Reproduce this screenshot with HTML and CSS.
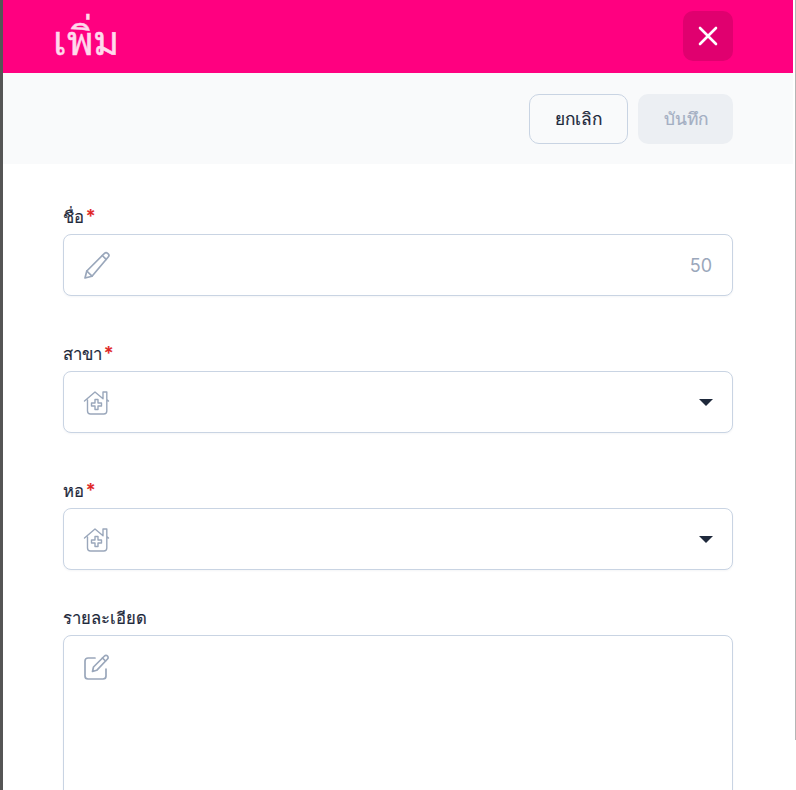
FILE: index.html
```html
<!DOCTYPE html>
<html lang="th">
<head>
<meta charset="utf-8">
<title>เพิ่ม</title>
<link rel="stylesheet" href="styles.css">
</head>
<body>
<div class="backdrop"></div>
<main class="panel">
  <header class="head">
    <h1 class="title">เพิ่ม</h1>
    <button class="close" type="button" aria-label="close">
      <svg width="24" height="24" viewBox="0 0 24 24" fill="none" stroke="#fff" stroke-width="2.6" stroke-linecap="round"><path d="M4 4l16 16M20 4L4 20"/></svg>
    </button>
  </header>
  <div class="toolbar">
    <button class="btn btn-cancel" type="button">ยกเลิก</button>
    <button class="btn btn-save" type="button">บันทึก</button>
  </div>
  <form class="form">
    <div class="field">
      <label class="label">ชื่อ<span class="req">*</span></label>
      <div class="control">
        <svg class="icon" width="28" height="28" viewBox="0 0 28 28" fill="none" stroke="#9aa7bb" stroke-width="1.7" stroke-linejoin="round" stroke-linecap="round"><path d="M3 27l1.800-7L22.500 2.300a2.200 2.200 0 0 1 3.100 0l.6.6a2.200 2.200 0 0 1 0 3.100L10 25.200z"/><path d="M20.300 4.500l3.900 3.900M4.800 20l5.200 5.200"/></svg>
        <span class="grow"></span>
        <span class="count">50</span>
      </div>
    </div>
    <div class="field">
      <label class="label">สาขา<span class="req">*</span></label>
      <div class="control">
        <svg class="icon" width="28" height="28" viewBox="0 0 28 28" fill="none" stroke="#9aa7bb" stroke-width="1.4" stroke-linejoin="round" stroke-linecap="round"><path d="M2.500 13L13 4l8 6.800M26.500 13L24.800 11.500V4H21v6.800M5.500 12v11a3 3 0 0 0 3 3h13.300a3 3 0 0 0 3-3V11.500M13 11.500h3V15h3.500v3H16v3.500h-3V18H9.500v-3H13z"/></svg>
        <span class="grow"></span>
        <span class="caret"></span>
      </div>
    </div>
    <div class="field">
      <label class="label">หอ<span class="req">*</span></label>
      <div class="control">
        <svg class="icon" width="28" height="28" viewBox="0 0 28 28" fill="none" stroke="#9aa7bb" stroke-width="1.4" stroke-linejoin="round" stroke-linecap="round"><path d="M2.500 13L13 4l8 6.800M26.500 13L24.800 11.500V4H21v6.800M5.500 12v11a3 3 0 0 0 3 3h13.300a3 3 0 0 0 3-3V11.500M13 11.500h3V15h3.500v3H16v3.500h-3V18H9.500v-3H13z"/></svg>
        <span class="grow"></span>
        <span class="caret"></span>
      </div>
    </div>
    <div class="field field-last">
      <label class="label">รายละเอียด</label>
      <div class="control control-area">
        <svg class="icon" width="28" height="28" viewBox="0 0 28 28" fill="none" stroke="#9aa7bb" stroke-width="1.7" stroke-linejoin="round" stroke-linecap="round"><path d="M13 5H6a3 3 0 0 0-3 3v15a3 3 0 0 0 3 3h15a3 3 0 0 0 3-3v-7"/><path d="M10.500 18.500l1-4.500L22.500 3a2.100 2.100 0 0 1 3 0 2.100 2.100 0 0 1 0 3L14.700 17.300z"/><path d="M20.500 5l3 3"/></svg>
      </div>
    </div>
  </form>
</main>
<div class="edge"></div>
</body>
</html>
```
FILE: styles.css
```css
* { box-sizing: border-box; }
html, body { margin: 0; height: 790px; overflow: hidden; background: #fff; }
body {
  display: flex;
  font-family: Inter, "Noto Sans", "Liberation Sans", sans-serif;
  color: #1e293b;
}
.backdrop { width: 3px; flex: none; background: #555; height: 790px; }
.panel { width: 790px; flex: none; background: #fff; height: 790px; overflow: hidden; }
.edge { width: 1px; margin-left: 2px; height: 740px; flex: none; background: #b5b5b5; }
.head {
  height: 73px;
  background: #ff0080;
  display: flex;
  align-items: center;
  justify-content: space-between;
  padding: 0 60px 0 50px;
}
.title { margin: 8px 0 0; font-size: 40px; font-weight: 500; line-height: 1; color: #ffd9ec; -webkit-text-stroke: .5px #ffd9ec; }
.close {
  width: 50px; height: 50px; padding: 0;
  margin-bottom: 1px;
  border: 0; border-radius: 10px;
  background: #e0006f;
  display: flex; align-items: center; justify-content: center;
}
.toolbar {
  height: 91px;
  background: #f9fafb;
  display: flex;
  justify-content: flex-end;
  align-items: center;
  gap: 10px;
  padding: 1px 60px 0 0;
}
.btn {
  height: 50px;
  border-radius: 10px;
  font: 500 17.300px Inter, "Noto Sans", sans-serif;
  -webkit-text-stroke: .2px currentColor;
  padding: 0;
}
.btn-cancel { width: 99px; background: transparent; border: 1px solid #c9d4e3; color: #1e293b; }
.btn-save { width: 95px; background: #eceff3; border: 0; color: #a3aec2; }
.form { padding: 40px 60px 0; }
.field { margin-bottom: 45px; }
.field:nth-child(3) { margin-bottom: 35px; }
.field-last { margin-bottom: 0; }
.label { display: block; height: 30px; padding-top: 1px; font-size: 16.600px; font-weight: 500; line-height: 24px; color: #1e293b; -webkit-text-stroke: .2px currentColor; }
.req { color: #e02424; margin-left: 2px; font-size: 18px; font-weight: 500; }
.control {
  height: 62px;
  border: 1px solid #c9d4e3;
  border-radius: 8px;
  box-shadow: 0 1px 2px rgba(30, 50, 90, .05);
  display: flex;
  align-items: center;
  padding: 0 19px 0 20px;
  background: #fff;
}
.control-area { height: 300px; align-items: flex-start; padding-top: 17px; }
.grow { flex: 1; }
.count { font-size: 18px; color: #9aa7bb; margin-right: 1px; }
.caret {
  width: 0; height: 0;
  border-left: 7px solid transparent;
  border-right: 7px solid transparent;
  border-top: 7px solid #1e293b;
}
.icon { flex: none; margin-left: -2px; }
```
